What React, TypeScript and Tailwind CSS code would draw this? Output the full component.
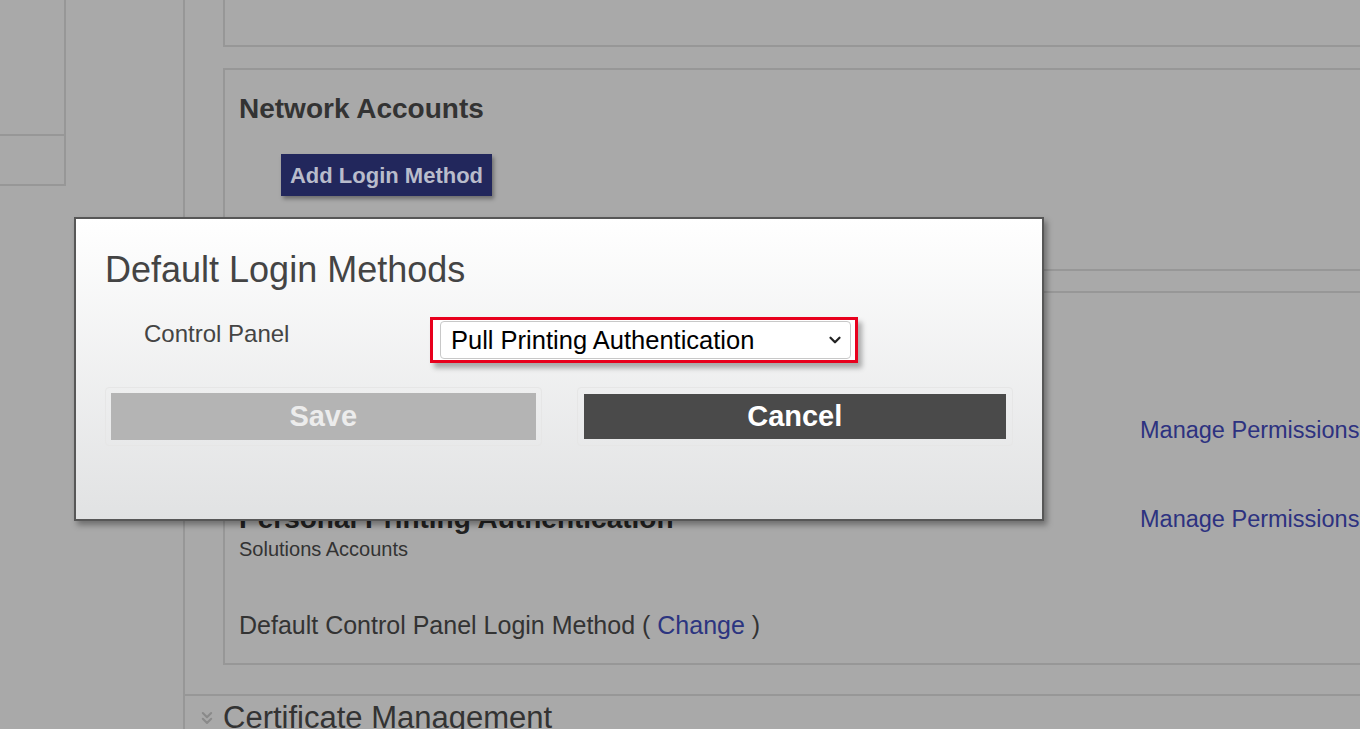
import { ChevronDown, ChevronsDown } from 'lucide-react'

function SideColumn() {
  return (
    <div className="w-[183px] shrink-0">
      <div className="w-[66px] border-b-2 border-r-2 border-[#979797]">
        <div className="h-[136px] border-b-2 border-[#979797]" />
        <div className="h-[48px]" />
      </div>
    </div>
  )
}

function NetworkAccounts() {
  return (
    <div className="mt-[21px] h-[203px] w-[1200px] border-2 border-[#979797] pl-[14px] pt-[22px]">
      <h2 className="text-[28px] font-bold leading-[34px] text-[#333]">Network Accounts</h2>
      <div className="mt-[28px] pl-[42px]">
        <button className="h-[42px] w-[211px] bg-[#22275c] text-[22px] font-bold text-[#b9bccb] shadow-[2px_3px_4px_rgba(0,0,0,0.35)]">
          Add Login Method
        </button>
      </div>
    </div>
  )
}

function LoginMethods() {
  return (
    <div className="mt-[20px] h-[374px] w-[1200px] border-2 border-[#979797] pl-[14px] pt-[124px]">
      <div className="grid grid-cols-[901px_1fr]">
        <div />
        <a className="whitespace-nowrap text-[23.5px] leading-[26px] text-[#2d3280]">Manage Permissions</a>
      </div>
      <div className="mt-[60px] grid h-[32px] grid-cols-[901px_1fr] items-center">
        <h3 className="whitespace-nowrap text-[28px] font-bold leading-[32px] text-[#222]">Personal Printing Authentication</h3>
        <a className="whitespace-nowrap text-[23.5px] leading-[26px] text-[#2d3280]">Manage Permissions</a>
      </div>
      <div className="mt-[2px] text-[20px] leading-[24px] text-[#333]">Solutions Accounts</div>
      <div className="mt-[49px] text-[25px] leading-[30px] text-[#333]">
        Default Control Panel Login Method ( <a className="text-[#2c3580]">Change</a> )
      </div>
    </div>
  )
}

function Modal() {
  return (
    <div className="absolute left-[74px] top-[217px] h-[304px] w-[970px] border-2 border-[#575757] bg-gradient-to-b from-white to-[#e1e2e3] px-[29px] shadow-[3px_4px_6px_rgba(0,0,0,0.35)]">
      <h1 className="mt-[29px] text-[36px] leading-[44px] text-[#444]">Default Login Methods</h1>
      <div className="mt-[25px] flex items-start">
        <span className="ml-[39px] mt-[3px] w-[286px] text-[24px] leading-[28px] text-[#444]">Control Panel</span>
        <div className="flex h-[46px] w-[428px] items-center border-[3px] border-[#e8001d] bg-white pl-[7px] pr-[4px] shadow-[4px_5px_5px_rgba(0,0,0,0.3)]">
          <div className="flex h-[38px] w-full items-center justify-between rounded-[4px] border border-[#c8c8c8] pl-[10px] pr-[6px]">
            <span className="text-[25.5px] leading-[30px] text-black">Pull Printing Authentication</span>
            <ChevronDown size={18} strokeWidth={3} className="text-[#222]" />
          </div>
        </div>
      </div>
      <div className="mt-[24px] flex gap-[35px]">
        <div className="h-[59px] w-[437px] rounded-[4px] border border-[#e6e6e6] p-[5px]">
          <div className="flex h-full items-center justify-center bg-[#b4b4b4] text-[29px] font-bold text-[#ececec]">Save</div>
        </div>
        <div className="h-[59px] w-[437px] rounded-[4px] border border-[#e6e6e6] p-[6px]">
          <div className="flex h-full items-center justify-center bg-[#4a4a4a] text-[29px] font-bold text-white">Cancel</div>
        </div>
      </div>
    </div>
  )
}

export default function App() {
  return (
    <div className="relative flex h-[729px] w-[1360px] overflow-hidden bg-[#a9a9a9] font-['Liberation_Sans',Arial,sans-serif]">
      <SideColumn />
      <div className="flex-1 border-l-2 border-[#979797]">
        <div className="pl-[38px]">
          <div className="mt-[-10px] h-[57px] w-[1200px] border-2 border-[#979797]" />
          <NetworkAccounts />
          <LoginMethods />
        </div>
        <div className="mt-[29px] flex items-center border-t-2 border-[#979797] pl-[12px] pt-[4px]">
          <ChevronsDown size={20} strokeWidth={2.5} className="text-[#8a8a8a]" />
          <span className="ml-[6px] whitespace-nowrap text-[31px] leading-[36px] text-[#333]">Certificate Management</span>
        </div>
      </div>
      <Modal />
    </div>
  )
}
